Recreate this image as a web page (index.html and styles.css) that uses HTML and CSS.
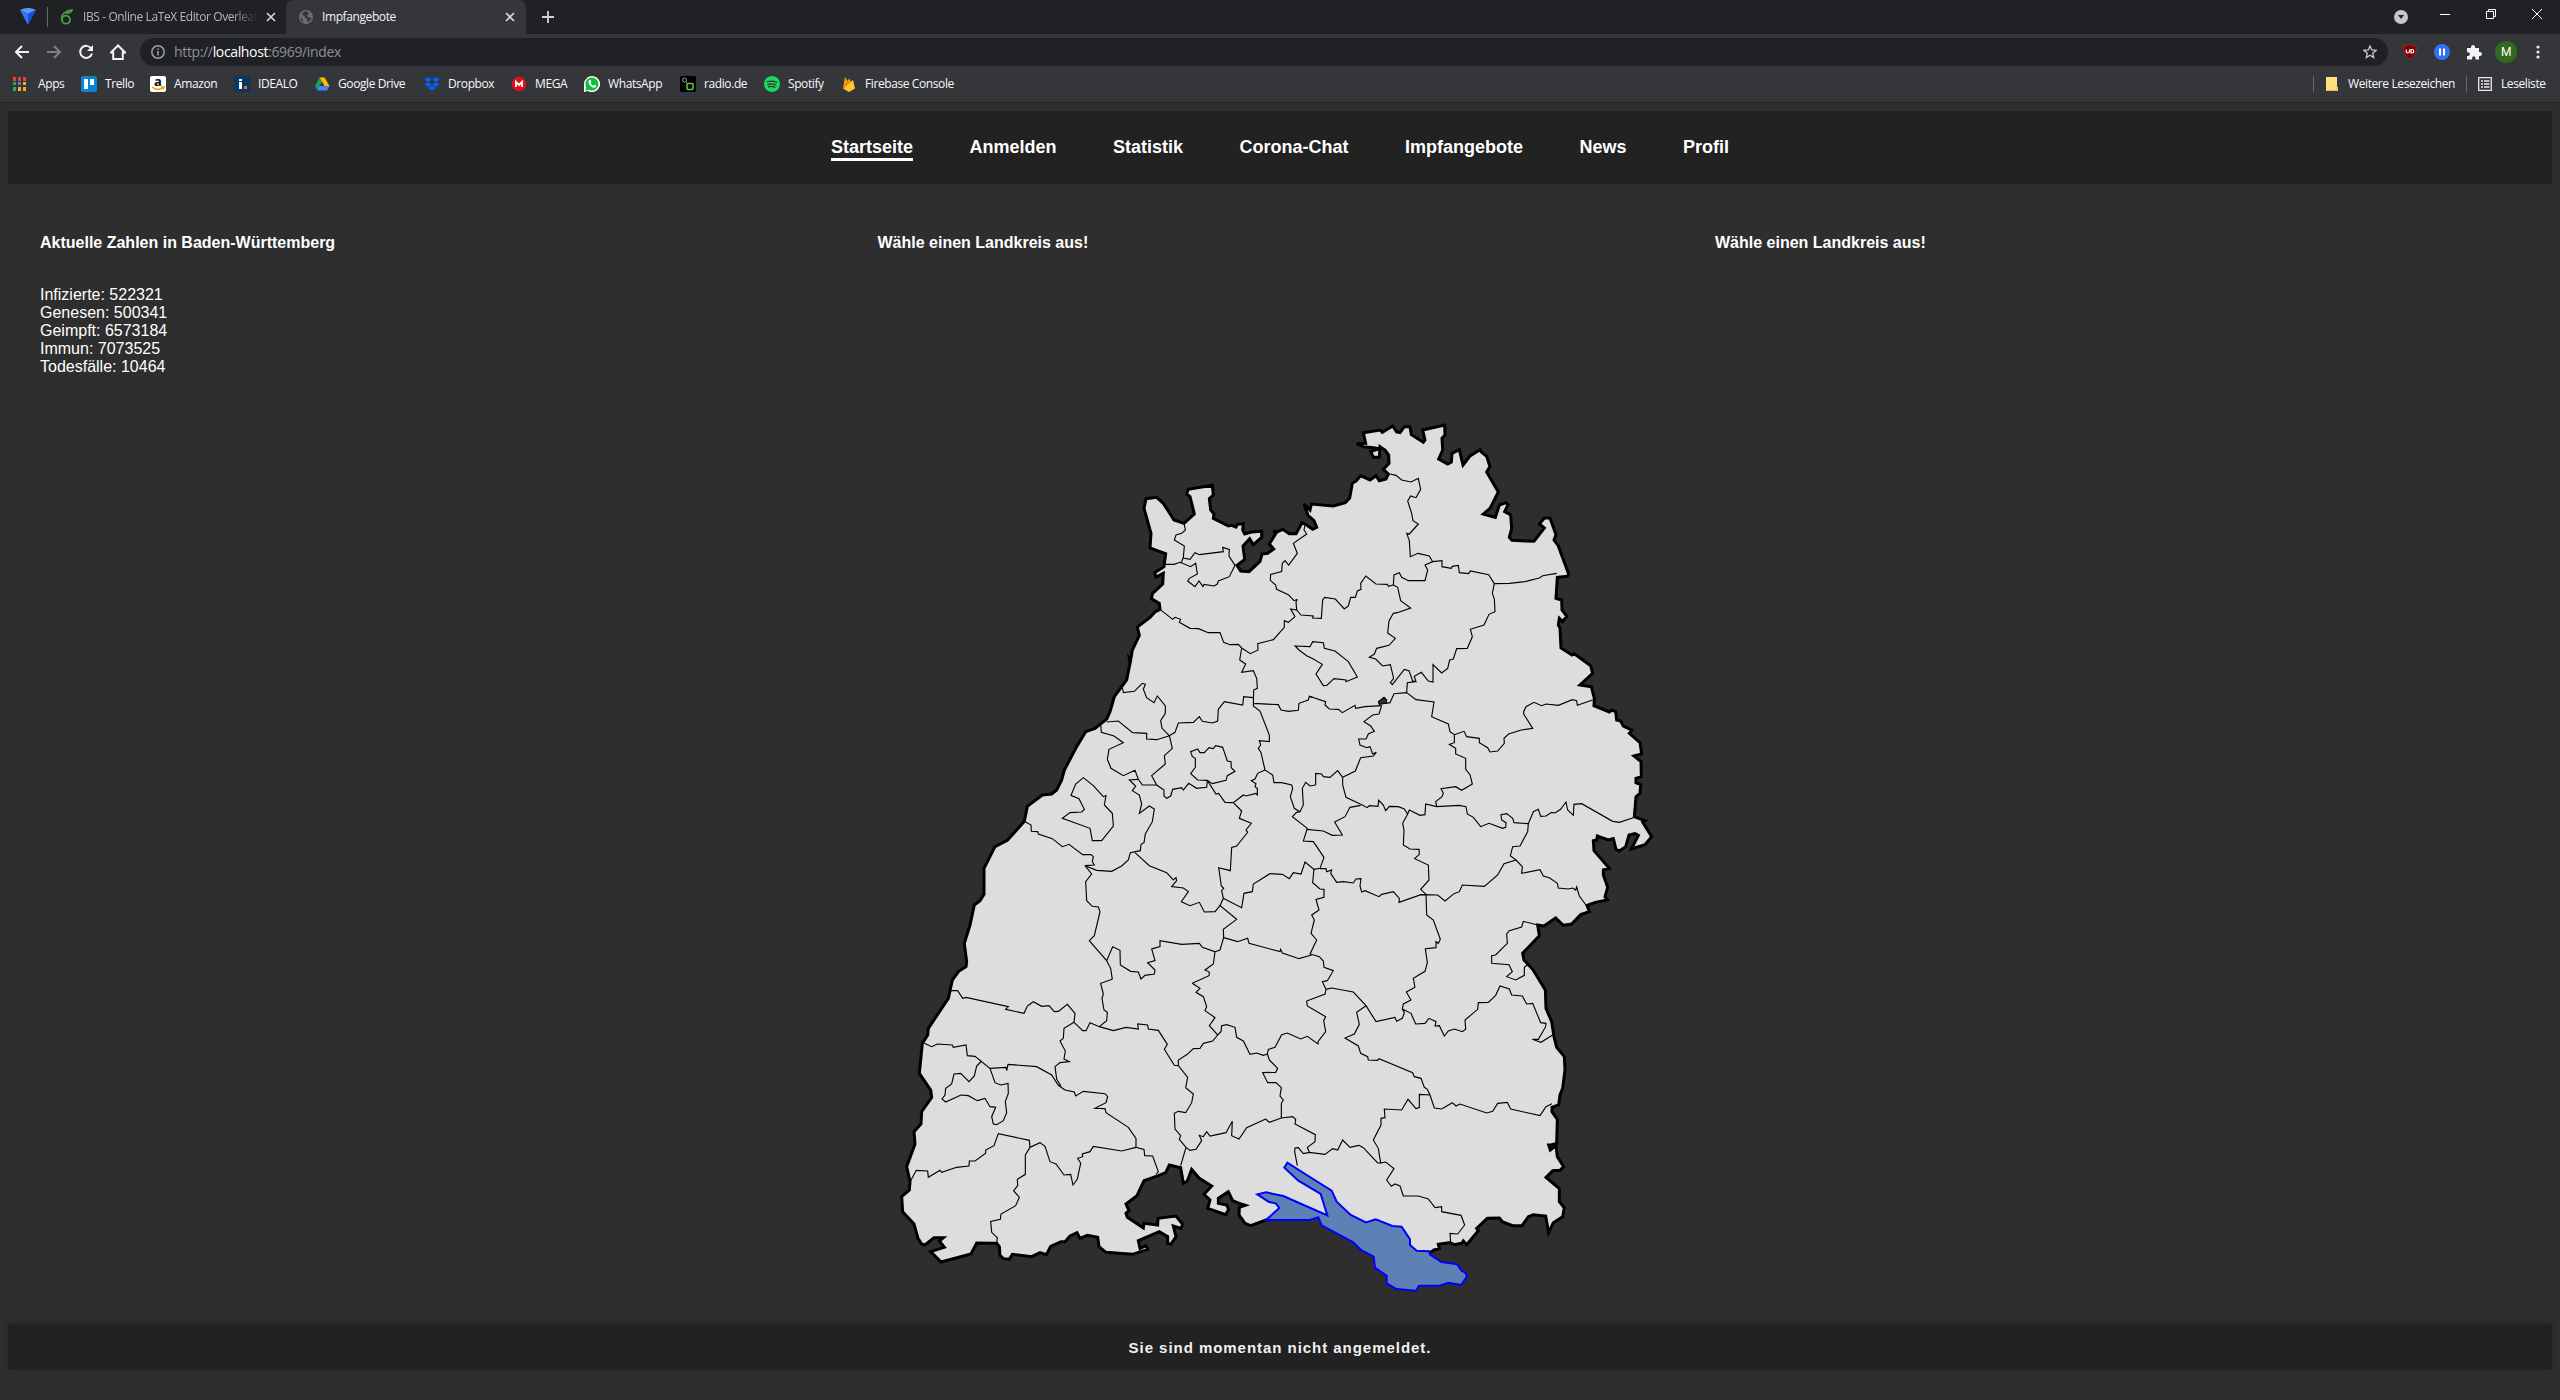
FILE: index.html
```html
<!DOCTYPE html>
<html lang="de">
<head>
<meta charset="utf-8">
<title>Impfangebote</title>
<link rel="stylesheet" href="styles.css">
</head>
<body>
<header class="browser">
  <div class="tabstrip">
    <div class="pinned"><svg width="18" height="18" viewBox="0 0 18 18"><path fill="#5f97ff" d="M1 3Q9-1 17 3L9 7z"/><path fill="#3b73f5" d="M1 3l8 4v11z"/><path fill="#1551e0" d="M17 3L9 7v11z"/></svg></div>
    <span class="divider"></span>
    <div class="tab">
      <svg class="tab-icon" width="14" height="16" viewBox="0 0 14 16" fill="none" stroke="#47a141" stroke-width="1.8"><ellipse cx="6" cy="10.7" rx="4" ry="4"/><path d="M2 11Q1 5 6 3M5 4Q8 1 12 1.200Q11 4 6.500 4"/></svg>
      <span class="tab-title faded">IBS - Online LaTeX Editor Overleaf</span>
      <svg class="close" width="10" height="10" viewBox="0 0 10 10"><path d="M1 1l8 8M9 1l-8 8"/></svg>
    </div>
    <div class="tab active">
      <svg class="tab-icon" width="14" height="14" viewBox="0 0 14 14"><circle cx="7" cy="7" r="7" fill="#6b6e72"/><path fill="#35363a" d="M7 1Q3 2 3.500 5L6 6l-1 1 3 2v3q4-1 4.500-4L9 7 8 5l2-1-1-2zM1.500 7L4 9.500V12Q2 11 1.500 7z"/></svg>
      <span class="tab-title">Impfangebote</span>
      <svg class="close" width="10" height="10" viewBox="0 0 10 10"><path d="M1 1l8 8M9 1l-8 8"/></svg>
    </div>
    <svg class="newtab" width="14" height="14" viewBox="0 0 14 14"><path d="M7 1v12M1 7h12"/></svg>
    <div class="window-buttons">
      <svg width="14" height="14" viewBox="0 0 14 14"><circle cx="7" cy="7" r="7" fill="#c4c6ca"/><path fill="#202124" d="M4 5h6L7 9z"/></svg>
      <svg width="10" height="10" viewBox="0 0 10 10"><path class="line" d="M0 5.500h10"/></svg>
      <svg width="10" height="10" viewBox="0 0 10 10"><path class="line" d="M.5 2.500h7v7h-7zM2.500 2.500v-2h7v7h-2"/></svg>
      <svg width="10" height="10" viewBox="0 0 10 10"><path class="line" d="M0 0l10 10M10 0L0 10"/></svg>
    </div>
  </div>
  <div class="toolbar">
    <div class="nav-icons">
      <svg width="16" height="16" viewBox="0 0 16 16"><path d="M15 8H2M8 2L2 8l6 6"/></svg>
      <svg class="disabled" width="16" height="16" viewBox="0 0 16 16"><path d="M1 8h13M8 2l6 6-6 6"/></svg>
      <svg width="16" height="16" viewBox="0 0 16 16"><path d="M13.200 4.500A6 6 0 1 0 14 9.500"/><path class="solid" d="M15 1v6H9z"/></svg>
      <svg width="16" height="16" viewBox="0 0 16 16"><path d="M1 8.500L8 1.500l7 7h-2.200V15H3.200V8.500z"/></svg>
    </div>
    <div class="omnibox">
      <svg width="14" height="14" viewBox="0 0 14 14" fill="none" stroke="#9aa0a6" stroke-width="1.500"><circle cx="7" cy="7" r="6.200"/><path d="M7 6v4.500M7 3.500V5"/></svg>
      <span class="url">http://<b>localhost</b>:6969/index</span>
      <svg class="star" width="14" height="14" viewBox="0 0 14 14"><path fill="none" stroke="#c7c9cc" stroke-width="1.300" d="M7 1l1.700 4 4.300.4-3.300 2.800 1 4.300L7 10.200l-3.700 2.300 1-4.300L1 5.400 5.300 5z"/></svg>
    </div>
    <div class="extensions">
      <svg width="16" height="16" viewBox="0 0 16 16"><path fill="#800000" stroke="#a33" stroke-width=".6" d="M8 .5Q11 2 14.500 2q.5 9-6.500 13.500Q1 11 1.500 2 5 2 8 .5z"/><path fill="none" stroke="#fff" stroke-width="1.200" d="M4.300 5.500v2q0 1.500 1.500 1.500T7.500 7.500v-2M9 5.500V9h1q1.800 0 1.800-1.700T10 5.500z"/></svg>
      <svg width="16" height="16" viewBox="0 0 16 16"><circle cx="8" cy="8" r="8" fill="#3170fb"/><path stroke="#fff" stroke-width="2" d="M6 4.500v7M10 4.500v7"/></svg>
      <svg width="16" height="16" viewBox="0 0 16 16"><path fill="#f1f3f4" d="M1 4h4V3a2 2 0 0 1 4 0v1h4v4h1a2 2 0 0 1 0 4h-1v3.500H9.500V14a1.700 1.700 0 0 0-3.400 0v1.500H1V12h1a1.900 1.900 0 0 0 0-3.800H1z"/></svg>
      <span class="avatar">M</span>
      <svg class="dots" width="4" height="14" viewBox="0 0 4 14" fill="#e8eaed"><circle cx="2" cy="2" r="1.600"/><circle cx="2" cy="7" r="1.600"/><circle cx="2" cy="12" r="1.600"/></svg>
    </div>
  </div>
  <div class="bookmarks">
    <a class="bm bm-apps"><svg width="16" height="16" viewBox="0 0 16 16"><path fill="#ea3f35" d="M1 1h3v4H1zM6 1h3v4H6zM11 1h3v4h-3z"/><path fill="#35a853" d="M1 6h3v3H1zM1 11h3v4H1z"/><path fill="#4286f5" d="M6 6h3v3H6z"/><path fill="#f5ac16" d="M11 6h3v3h-3zM6 11h3v4H6zM11 11h3v4h-3z"/></svg>Apps</a>
    <a class="bm bm-trello"><svg width="16" height="16" viewBox="0 0 16 16"><rect width="16" height="16" rx="2.500" fill="#0785d2"/><path fill="#fff" d="M3 3h4v10H3zM9 3h4v6H9z"/></svg>Trello</a>
    <a class="bm bm-amazon"><svg width="16" height="16" viewBox="0 0 16 16"><rect width="16" height="16" rx="2" fill="#fff"/><text x="4" y="9.500" font-size="13" font-weight="bold" fill="#111">a</text><path fill="none" stroke="#f90" stroke-width="1.500" d="M2 11q6 4.500 11.500.5M11 11h3l-.8 2.500"/></svg>Amazon</a>
    <a class="bm bm-idealo"><svg width="16" height="16" viewBox="0 0 16 16"><path fill="#0a3761" d="M0 0h16v16H0z"/><path fill="#fff" d="M5 3h3v2H5zM5 6h3v7H5z"/><path fill="#f60" d="M10 10h3v3h-3z"/></svg>IDEALO</a>
    <a class="bm bm-drive"><svg width="16" height="16" viewBox="0 0 16 16"><path fill="#19a15f" d="M5.500 1.500L1 10l2 4 5-8z"/><path fill="#fbbc04" d="M5.500 1.500h5L15.500 10h-5z"/><path fill="#4285f4" d="M5 10h10.500L13 14.500H3z"/></svg>Google Drive</a>
    <a class="bm bm-dropbox"><svg width="16" height="16" viewBox="0 0 16 16" fill="#0061fe"><path d="M4.200 1l3.800 2.500L4.200 6 .4 3.500zM11.800 1l3.800 2.500L11.800 6 8 3.500zM4.200 6L8 8.500 4.200 11 .4 8.500zM11.800 6l3.800 2.500-3.800 2.500L8 8.500zM8 9.500l3.800 2.500L8 14.500 4.200 12z"/></svg>Dropbox</a>
    <a class="bm bm-mega"><svg width="16" height="16" viewBox="0 0 16 16"><circle cx="8" cy="8" r="7.200" fill="#e0101c"/><path fill="none" stroke="#fff" stroke-width="1.800" d="M5 11V6l3 3 3-3v5"/></svg>MEGA</a>
    <a class="bm bm-whatsapp"><svg width="16" height="16" viewBox="0 0 16 16"><path fill="#fff" d="M0 16V8a8 8 0 1 1 4 7z"/><path fill="#10bd3c" d="M1.300 14.700l.9-3.500a6.500 6.500 0 1 1 2.500 2.500z"/><path fill="#fff" d="M5 4l1.500-.2L7.300 6l-.8 1q1 2 2.800 2.700l1-1 2 1-.3 1.400Q9 13 6 9.500 3.500 6.500 5 4z"/></svg>WhatsApp</a>
    <a class="bm bm-radio"><svg width="16" height="16" viewBox="0 0 16 16"><rect width="16" height="16" rx="1.500"/><rect x="7" y="7.500" width="6" height="6" rx="1" fill="none" stroke="#5ecb3e" stroke-width="1.500"/><circle cx="4.500" cy="4" r="2" fill="none" stroke="#999"/><path stroke="#5ecb3e" d="M6 6l2 2"/></svg>radio.de</a>
    <a class="bm bm-spotify"><svg width="16" height="16" viewBox="0 0 16 16"><circle cx="8" cy="8" r="8" fill="#1ed760"/><path fill="none" stroke="#25372d" stroke-width="1.400" stroke-linecap="round" d="M3.500 5.700q5-1.500 9.200.8M4 8.300q4-1.200 7.700.7M4.500 10.700q3.500-.9 6.200.6"/></svg>Spotify</a>
    <a class="bm bm-firebase"><svg width="16" height="16" viewBox="0 0 16 16"><path fill="#ffa000" d="M2 12L4 1l2.500 4L8 2.500l2 3z"/><path fill="#f57c00" d="M2 12l4.500-7 2.500 3z"/><path fill="#ffca28" d="M2 12.500L12 4l2 8.500L8 16z"/></svg>Firebase Console</a>
    <div class="bookmarks-right">
      <span class="divider"></span>
      <a class="bm bm-more"><svg width="14" height="14" viewBox="0 0 14 14"><path fill="#ffe082" d="M1 0h11v10h1v4H1z"/><path fill="none" stroke="#e6bd3d" d="M12 9.500v4H1.500"/></svg>Weitere Lesezeichen</a>
      <span class="divider"></span>
      <a class="bm bm-list"><svg width="14" height="14" viewBox="0 0 14 14" fill="none" stroke="#e8eaed" stroke-width="1.300"><path d="M.7.7h12.600v12.600H.7zM3 4h2M6 4h5.500M3 7h2M6 7h5.500M3 10h2M6 10h5.500"/></svg>Leseliste</a>
    </div>
  </div>
</header>

<nav class="menu">
  <a class="current">Startseite</a>
  <a>Anmelden</a>
  <a>Statistik</a>
  <a>Corona-Chat</a>
  <a>Impfangebote</a>
  <a>News</a>
  <a>Profil</a>
</nav>

<main>
  <section class="figures">
    <div>
      <h4>Aktuelle Zahlen in Baden-Württemberg</h4>
      <ul>
        <li>Infizierte: 522321</li>
        <li>Genesen: 500341</li>
        <li>Geimpft: 6573184</li>
        <li>Immun: 7073525</li>
        <li>Todesfälle: 10464</li>
      </ul>
    </div>
    <div><h4>Wähle einen Landkreis aus!</h4></div>
    <div><h4>Wähle einen Landkreis aus!</h4></div>
  </section>

  <svg class="map" width="800" height="900" viewBox="0 0 2400 2700">
    <!-- state outline -->
    <path class="state" d="M752 780L757 750 778 706 772 681 810 652 825 636 840 628 838 610 814 596 818 580 848 552 850 520 828 531 824 518 852 500 857 461 810 444 813 400 792 325 798 296 830 292 850 310 882 360 912 370 943 342 930 290 920 282 925 268 997 256 1000 285 988 296 992 330 1002 342 1000 355 1045 378 1055 376 1068 381 1072 373 1090 371 1088 390 1094 402 1115 396 1145 394 1145 412 1120 434 1109 416 1089 438 1094 478 1071 496 1082 513 1107 515 1140 484 1146 462 1163 460 1181 447 1168 432 1188 400 1180 392 1190 396 1208 388 1228 401 1248 401 1266 368 1280 375 1298 388 1310 382 1302 362 1284 346 1272 312 1290 330 1294 312 1360 318 1396 308 1409 294 1417 250 1428 243 1442 227 1470 240 1488 227 1498 242 1518 237 1525 222 1510 208 1527 190 1526 165 1515 150 1500 140 1498 172 1480 172 1472 155 1498 146 1480 143 1450 140 1430 131 1457 130 1450 98 1500 90 1507 97 1538 78 1550 96 1560 98 1573 80 1590 80 1594 104 1630 127 1635 120 1628 90 1694 75 1695 105 1686 115 1688 150 1676 177 1703 192 1714 186 1716 160 1738 149 1749 195 1770 168 1800 149 1804 156 1820 169 1830 200 1820 216 1855 276 1830 325 1810 342 1846 352 1858 315 1878 308 1884 314 1874 335 1892 345 1895 385 1888 412 1896 421 1962 424 1993 384 1978 372 1993 354 2010 354 2028 404 2022 420 2034 436 2066 522 2062 529 2032 532 2028 595 2045 600 2046 630 2060 648 2048 665 2038 655 2035 675 2040 684 2043 744 2076 765 2083 761 2132 797 2138 820 2100 855 2134 860 2143 895 2142 917 2188 936 2195 930 2207 935 2210 960 2222 963 2230 978 2255 990 2248 1000 2280 1028 2285 1062 2262 1068 2283 1085 2284 1130 2268 1135 2268 1148 2282 1154 2280 1180 2268 1190 2263 1250 2295 1262 2288 1266 2315 1310 2295 1334 2254 1347 2275 1306 2265 1301 2247 1305 2237 1340 2218 1353 2208 1348 2200 1316 2185 1320 2152 1308 2150 1320 2140 1322 2142 1352 2188 1405 2170 1410 2170 1425 2183 1462 2175 1490 2182 1500 2146 1507 2121 1516 2128 1535 2102 1544 2075 1572 2050 1576 2027 1554 1992 1578 1973 1575 1978 1607 1928 1660 1932 1680 1958 1708 1996 1770 1998 1825 2015 1865 2022 1910 2030 1942 2053 1970 2055 2010 2048 2065 2040 2085 2036 2115 2016 2122 2016 2135 2032 2158 2030 2230 2012 2235 2006 2235 2011 2250 2028 2237 2032 2270 2051 2300 2040 2311 2018 2312 1998 2332 2038 2366 2038 2405 2053 2423 2048 2450 2020 2468 2006 2498 1997 2448 1960 2444 1945 2450 1926 2477 1898 2477 1868 2466 1858 2454 1822 2455 1790 2485 1795 2492 1760 2534 1750 2523 1745 2530 1722 2534 1710 2528 1675 2533 1678 2546 1662 2550 1650 2558 1600 2572 1490 2500 1325 2442 1250 2446 1158 2460 1112 2477 1095 2470 1077 2445 1078 2422 1096 2416 1078 2410 1058 2402 1045 2375 1015 2395 1015 2410 1040 2415 1046 2428 1037 2444 983 2425 990 2400 972 2383 995 2358 957 2334 935 2308 922 2343 910 2350 902 2303 868 2295 857 2318 835 2327 792 2342 771 2387 738 2412 747 2432 738 2440 742 2452 790 2484 792 2470 833 2475 834 2455 888 2448 908 2473 903 2485 880 2478 888 2510 873 2532 863 2530 863 2510 838 2495 775 2522 780 2545 798 2537 803 2548 757 2563 678 2557 657 2540 653 2512 622 2506 600 2515 591 2498 570 2508 555 2525 543 2525 512 2539 499 2564 480 2558 455 2570 397 2563 388 2578 370 2576 360 2566 358 2540 350 2530 290 2529 273 2562 183 2586 152 2555 193 2542 178 2523 190 2513 162 2513 135 2535 125 2532 114 2515 102 2472 68 2435 65 2390 88 2370 90 2345 80 2300 105 2232 102 2195 123 2172 125 2135 155 2092 152 2070 118 2020 127 1930 143 1905 145 1885 205 1795 217 1740 236 1714 258 1700 260 1685 253 1630 270 1575 283 1515 300 1502 312 1483 312 1405 345 1340 382 1321 433 1264 442 1219 487 1185 515 1182 530 1170 545 1140 553 1110 590 1040 617 995 645 985 680 957 690 935 703 890 740 840 750 790 748 775Z"/>
    <!-- district borders, north-west -->
    <g class="border" transform="translate(660 0)">
      <path d="M252 370L256 390 245 400 228 405 223 420 253 438 250 472 244 488M192 493L222 493 240 487 272 500 287 490 292 522 268 535 263 543 285 560 297 543 309 560 312 553 342 558 352 552 355 543 388 530 405 496 387 468 388 448 368 442 370 455 298 464 285 458 270 478 250 474"/>
      <path d="M180 628L218 658 225 652 242 658 238 667 270 685 295 686 325 698 360 698 371 727 390 734 415 733 425 744 451 761 474 750 473 731 520 719 553 682 553 662 565 667 585 650 572 627 590 630 588 605M592 598L582 602 565 584 530 568 527 555 511 541 512 523 545 515 547 490 555 482 566 495 592 460 580 430 620 402 612 390 616 372M588 605L592 598"/>
      <path d="M590 630L603 645 640 648 638 654 664 655 668 600 674 592 706 597 733 627 745 618 752 592 766 592 772 573 783 568 782 550 797 528 828 552 862 553 865 559 880 555M425 744L419 780"/>
      <path d="M585 738L630 740 638 725 670 728 673 745 705 753 745 785 772 831 738 845 738 840 702 836 680 856 670 857 648 822 667 793 640 777 620 767 597 750Z"/>
    </g>
    <!-- north-east -->
    <g class="border" transform="translate(1380 0)">
      <path d="M150 222L168 226 185 240 213 246 235 235 242 268 228 293 212 288 203 303 215 340 219 362 235 372 208 402 200 400 208 422 211 470 234 460 268 468 278 485M160 555L162 525 178 518 185 532 205 542 255 542 263 510 255 495 278 485 306 482 306 500 334 505 337 499 355 496 358 518 386 521 391 513 446 524 463 551 508 550 555 545 598 534 608 527 650 520"/>
      <path d="M463 551L457 580 463 597 465 635 447 643 432 675 391 688 397 710 382 745 350 746 340 777 329 780 323 805 305 819 279 794 279 846 265 843 244 817 223 829 228 845 218 843 207 812 193 808 157 854 151 848 161 835 151 794 128 798 107 777 88 772 103 762 110 745 147 736 166 715 143 699 147 663 160 640 172 638 212 624 182 602 173 562 160 555M225 845L202 848 200 878"/>
    </g>
    <!-- west -->
    <g class="border" transform="translate(240 750)">
      <path d="M839 30L857 42 845 67 880 62 890 85 892 115 881 120 880 168 900 183 928 255 928 275 898 272 902 285 895 295 903 308 915 360 938 375 942 398 965 398 995 405 998 415 991 440 1003 475 1020 485 1030 465 1027 415 1037 397 1050 408 1067 405M880 160L955 164 963 180 985 184 1015 181 1017 160 1045 150 1048 139 1058 142"/>
      <path d="M487 113L490 128 523 124 547 100 556 103 550 118 560 143 582 158 592 138 616 168 616 190 602 212 606 235 628 257M440 216L475 213 518 248 560 250 560 267 590 269 628 257 645 247 655 219 700 217 718 200 727 214 757 219 773 213 775 178 793 155 848 165 851 140 880 143"/>
      <path d="M422 222L424 247 462 258 490 278 447 298 442 328 453 355 490 377 525 361 535 388 547 405 590 405M628 257L637 295 613 317 616 342 575 377 590 405 612 420 612 438 620 445 632 438 638 418 665 413 670 420 686 400 710 415 740 412 742 391"/>
      <path d="M713 297L692 305 697 320 706 325 706 352 692 371 713 390 742 391 757 401 798 391 802 377 825 364 814 353 813 335 802 333 788 292 767 287 760 296 747 293 733 308 720 308ZM370 383L400 407 430 440 438 437 433 465 457 490 460 528 425 572 397 572 390 535 307 505 330 488 365 486 373 478 357 446 333 436 347 402Z"/>
      <path d="M742 391L768 432 776 430 795 457 820 458 850 435 858 438 888 430 892 435 892 415 885 410 888 401 874 392 885 387 893 370 915 360M820 458L845 483 838 505 874 520 858 540 863 547 830 588 815 592 811 662 776 653 784 708 791 715 785 722 790 745 780 767"/>
      <path d="M535 388L508 390 527 408 517 422 538 435 545 462 538 490 568 468 583 477 577 515 556 552 552 578 543 583 541 602 511 608 505 630 485 648 455 664 410 661 375 647 403 645 397 635 400 620 393 614 368 614 327 583 307 590 277 566 235 552 233 545 214 544 213 525 193 514"/>
      <path d="M375 647L395 672 377 695 380 752 397 769 415 771 420 785 403 857 388 872 440 932 458 890 480 901 481 945 512 964 535 966 543 987 555 976 583 972 585 960 563 938 585 932 575 897 600 890 600 872 665 883 718 880 727 892 765 905 760 942 735 960 748 966 747 977 697 1000M440 932L452 955 457 988"/>
      <path d="M525 608L568 647 620 668 640 690 648 683 650 692 635 710 670 714 685 725 664 755 690 767 718 757 733 786 765 785 780 767 830 808 790 838 791 863 780 900 765 905M791 863L833 875 863 865 867 880 960 905 962 898 967 909 1017 926 1055 915M1020 485L1010 487 997 500 1042 535 1030 573 1060 575 1092 622 1080 655 1062 658 1035 636 1023 672 1000 668 988 686 967 673 930 671 880 702 877 725 852 730 845 773 800 750 790 745"/>
    </g>
    <!-- east -->
    <g class="border" transform="translate(1290 750)">
      <path d="M290 128L252 131 240 158 228 160M215 167L207 192 188 195 162 215 182 228 193 244 175 252 168 267 146 267 150 285 170 293 180 290 188 312 199 307 190 318 152 323 136 363 98 382M290 128L318 149 372 156 365 200 415 222 420 245 433 254 462 244 470 260 508 265 508 278 533 293 540 306 563 303 583 280 582 265 596 252 634 240 668 235 641 192 641 185 648 170 672 157 695 167 708 162 745 166 787 149 800 152 802 166 848 150"/>
      <path class="exclave" d="M205 155L222 142 230 150 228 160 208 163Z"/>
      <path d="M433 254L433 278 418 283 437 295 437 312 467 325 467 358 480 374 487 402 455 421 437 410 393 416 400 430 396 440 377 455 380 468M-2 139L47 155 45 165 58 177 85 178 97 188 135 166 137 175 165 170 215 167M17 405L17 370 35 372 40 380 60 382 83 362 98 382 98 405 108 442 152 463"/>
      <path d="M152 466L120 472 105 500 74 516 97 555 67 556 40 543 -10 538M152 463L172 473 178 467 204 469 206 451 220 465 227 482 238 469 265 470 283 477 293 492 298 480 330 496 345 494 347 462 380 470 448 466 468 470 472 492 490 502 512 530 537 520 578 535 587 532 588 518 575 510 573 494 590 491 608 505 612 518 655 521 670 485 685 478 692 499 708 498 725 487 735 489 752 478 768 456 773 480 790 496 792 463 815 461 908 514 928 517 970 503"/>
      <path d="M293 492L278 520 282 540 280 585 300 597 327 598 328 613 314 626 355 645 357 690 332 718 348 733M655 521L653 545 630 588 608 590 601 617 618 630 582 641 563 675 523 709 457 705 448 725 432 731 405 753 383 735 333 734 267 757 268 745 250 725 215 733 207 740 165 722 155 726 150 708 153 686 138 687 130 699 100 695 80 697 62 670 65 660 50 665 48 656 30 656"/>
      <path d="M618 630L637 650 635 670 690 659 700 678 718 683 742 700 745 714 775 717 788 714 797 720 800 711 808 738 828 765M683 825L640 814 635 831 598 842 590 852 592 880 557 915 545 917 545 940 597 944 607 965 590 980 617 990 643 976 643 952 652 945"/>
      <path d="M348 733L350 795 370 810 391 868 385 880 378 875 378 893 346 896 352 938 345 964 310 985 315 1012M12 656L8 698 30 717 42 718 42 742 18 748 27 780 5 795 13 810 3 850 20 870 0 912 28 920 40 933 42 952 70 962 52 992 37 995 48 1018"/>
    </g>
    <!-- south-west -->
    <g class="border" transform="translate(0 1740)">
      <path d="M213 32L233 32 248 55 258 52 385 80 377 88 432 100 442 78 460 65 485 79 507 77 523 95 535 94 562 73 585 100 582 127 608 152 618 152 630 128 658 140 700 152 738 142 775 147 773 132 803 135 805 147 835 151 862 193 853 208 883 256 895 257M658 140L680 122 682 97 672 90 666 55 670 42 662 10 697 -2"/>
      <path d="M937 10L960 25 948 37 970 50 980 80 975 92 1005 113 988 137 1013 165 1023 155 1025 137 1040 134 1065 142 1070 172 1090 183 1110 223 1130 219 1150 226 1162 222"/>
      <path d="M1013 165L998 183 970 190 960 205 940 206 922 223 895 240 895 257 923 292 917 323 940 342 935 368 917 398 895 394 883 400 885 447 902 467 898 478 918 502 930 511 948 508 965 482 958 466 970 470 980 455 990 468 1038 458 1057 424 1055 467 1077 477 1100 443 1157 417M918 502L902 557"/>
      <path d="M582 127L552 145 550 175 540 183 556 213 552 237 568 245 540 248 525 260 530 297 543 319M133 190L155 200 172 192 217 195 220 202 258 195 262 227 285 229 330 265 378 262 380 272 384 253 470 260 515 285 535 316 555 330 583 336 587 348 610 334 675 341 683 350 678 368 645 385 675 386 678 398 745 442 768 475 768 502 792 508 794 527 818 528 835 575 828 583"/>
      <path d="M305 243L290 258 283 288 267 305 242 280 222 282 215 312 197 325 195 345 186 357 197 366 243 345 265 347 292 362 315 355 330 380 347 382 335 410 340 432 350 434 370 422 380 398 376 365 385 340 384 310 362 315 345 308 330 265M92 602L109 571 143 573 145 592 180 571 185 577 230 562 267 558 268 543 285 543 317 520 317 510 342 497 355 461 448 481 450 502 480 488 495 499 510 545 528 552 552 585 572 583 579 615 592 597 602 550 593 535 608 530 607 522 630 515 640 499 725 513 768 502M450 502L436 525 436 583 412 598 413 617 401 632 418 652 407 677 363 702 361 718 332 724 335 757 352 773 350 790"/>
    </g>
    <!-- south-east -->
    <g class="border" transform="translate(1050 1740)">
      <path d="M288 28L285 42 230 63 232 78 287 110 281 122 287 155 264 185 264 192 232 169 212 177 172 159 155 164 135 202 115 208 112 222 118 240 143 265 137 277 98 278 113 308 138 308 154 323 150 348 160 360 154 370 154 414M107 417L118 427 154 414 188 410 197 418 195 432 256 464 255 485 232 502 238 517M202 557L194 515 195 504 205 503 220 521 238 517 285 523 308 506 323 510 338 480 360 502 387 496 400 503 443 549 452 549"/>
      <path d="M288 28L305 24 370 36 408 77 438 125 495 112 500 124 517 115 523 98 517 87M555 22L529 36 543 60 520 72 517 87 543 100 557 132 585 130 597 115 618 125 615 138 628 137 643 168 655 153 673 147 697 155 707 148 705 120 743 88 745 68 775 67 797 46 810 18 838 27 845 45 877 48 890 72 908 70 932 128 948 130 947 140 925 178 907 178 933 187 968 165"/>
      <path d="M408 77L380 97 388 133 373 162 345 174 385 198 392 220 413 230 415 240 443 241 447 236 548 278 553 290 573 295 583 322 592 328 600 345 613 384 635 387 667 368 678 378 690 372 770 399 788 394 803 370 832 367 842 387 930 407 948 380 966 371"/>
      <path d="M600 345L568 343 568 383 558 386 534 358 515 390 463 387 465 413 453 415 453 435 430 480 445 505 452 549 467 546 492 566 470 600 484 619 495 612 510 618 520 648 565 648 595 657 615 683 635 680 635 695 693 706 704 735 683 762 660 760 662 788"/>
      <path class="lake" d="M172 548L163 563 205 602 272 642 292 706 160 648 108 637 82 643 117 666 137 670 148 684 108 720 240 720 265 712 275 736 370 787 393 810 431 830 435 863 470 887 470 910 500 927 558 932 567 917 628 917 655 908 693 915 711 890 705 877 695 873 682 853 635 846 600 824 597 814 560 812 540 795 540 778 515 740 487 738 437 718 408 727 362 705 320 665 305 632 235 588Z"/>
    </g>
  </svg>
</main>

<footer class="status">Sie sind momentan nicht angemeldet.</footer>
</body>
</html>
```
FILE: styles.css
```css
* { box-sizing: border-box; }
body {
  margin: 0;
  width: 2560px;
  height: 1400px;
  overflow: hidden;
  background: #2e2e2e;
  color: #fff;
  font-family: "Liberation Sans", Arial, sans-serif;
  font-size: 16px;
}
svg { flex: none; display: block; }

/* browser window */
.browser {
  height: 103px;
  background: #35363a;
  border-bottom: 1px solid #252526;
  font: 12px/16px "Open Sans", "Noto Sans", sans-serif;
  letter-spacing: -0.4px;
}
.tabstrip {
  display: flex;
  align-items: center;
  height: 34px;
  background: #202124;
}
.pinned { width: 47px; padding: 0 0 2px 19px; }
.divider { width: 1px; height: 20px; background: #66686b; flex: none; }
.tab {
  display: flex;
  align-items: center;
  width: 238px;
  height: 34px;
  padding-left: 12px;
  color: #b4b7bb;
}
.tab-icon { width: 14px; margin-right: 9px; }
.tab-title { width: 175px; white-space: nowrap; overflow: hidden; }
.faded {
  -webkit-mask-image: linear-gradient(90deg, #000 85%, transparent);
  mask-image: linear-gradient(90deg, #000 85%, transparent);
}
.close { margin-left: 8px; fill: none; stroke: #d8dade; stroke-width: 1.6; }
.tab.active {
  width: 240px;
  padding-left: 13px;
  background: #35363a;
  border-radius: 8px 8px 0 0;
  color: #f1f3f4;
}
.active .close { margin-left: 8px; }
.newtab { margin-left: 15px; fill: none; stroke: #d0d2d5; stroke-width: 1.8; }
.window-buttons { display: flex; align-items: center; margin-left: auto; padding-right: 18px; gap: 36px; }
.window-buttons svg:nth-child(n+2) { margin-bottom: 6px; }
.window-buttons svg:first-child { margin-right: -4px; }
.line { fill: none; stroke: #fff; stroke-width: 1; }

.toolbar { display: flex; align-items: center; height: 36px; }
.nav-icons { display: flex; gap: 16px; width: 140px; padding-left: 14px; }
.nav-icons path { fill: none; stroke: #f1f3f4; stroke-width: 2; }
.nav-icons .disabled path { stroke: #7d7f83; }
.nav-icons .solid { fill: #f1f3f4; stroke: none; }
.omnibox {
  display: flex;
  align-items: center;
  width: 2248px;
  height: 28px;
  padding: 0 11px;
  border-radius: 14px;
  background: #202124;
}
.url { margin-left: 9px; font-size: 14px; letter-spacing: -0.35px; color: #8d9196; }
.url b { color: #fff; font-weight: 400; }
.star { margin-left: auto; }
.extensions { display: flex; align-items: center; gap: 16px; padding-left: 14px; }
.avatar {
  width: 22px;
  height: 22px;
  margin: 0 -3px;
  border-radius: 50%;
  background: #33691e;
  color: #fff;
  font: 12px/22px Roboto, sans-serif;
  text-align: center;
}
.dots { margin-left: 6px; }

.bookmarks { display: flex; align-items: center; height: 28px; padding-left: 12px; color: #f8f9fa; }
.bm { display: flex; align-items: center; gap: 8px; flex: none; white-space: nowrap; }
.bm-apps { width: 69px; gap: 10px; }
.bm-trello { width: 69px; }
.bm-amazon { width: 84px; }
.bm-idealo { width: 80px; }
.bm-drive { width: 110px; }
.bm-dropbox { width: 87px; }
.bm-mega { width: 73px; }
.bm-whatsapp { width: 96px; }
.bm-radio { width: 84px; }
.bm-spotify { width: 77px; }
.bookmarks-right { display: flex; align-items: center; margin-left: auto; width: 247px; }
.bookmarks-right .divider { height: 16px; }
.bm-more { width: 152px; padding-left: 11px; gap: 9px; }
.bm-list { padding-left: 11px; gap: 9px; }

/* page */
.menu {
  display: flex;
  justify-content: center;
  gap: 56.5px;
  height: 73px;
  margin: 8px 8px 0;
  padding-top: 25px;
  background: #222;
  font-size: 18px;
  line-height: 22px;
  font-weight: 700;
}
.menu a { height: 25px; border-bottom: 3px solid transparent; }
.menu .current { border-color: #fff; }
main { height: 1140px; padding-top: 49px; }
.figures {
  display: grid;
  grid-template-columns: 837.5px 837.5px 1fr;
  height: 167px;
  padding-left: 40px;
}
.figures h4 { margin: 0; font-size: 16px; line-height: 20px; }
.figures ul { margin: 33px 0 0; padding: 0; list-style: none; line-height: 18px; }
.map { margin: 0 auto; }
.state { fill: #ddd; stroke: #000; stroke-width: 9; }
.border { fill: none; stroke: #000; stroke-width: 3.4; }
.exclave { fill: #2e2e2e; }
.lake { fill: #5e81b5; stroke: #00f; stroke-width: 6; }
.status {
  height: 45px;
  margin: 0 8px;
  background: #222;
  box-shadow: 0 0 4px #222;
  color: #f1f1f1;
  font-size: 15px;
  font-weight: 700;
  line-height: 47px;
  letter-spacing: 0.96px;
  text-align: center;
}
```
